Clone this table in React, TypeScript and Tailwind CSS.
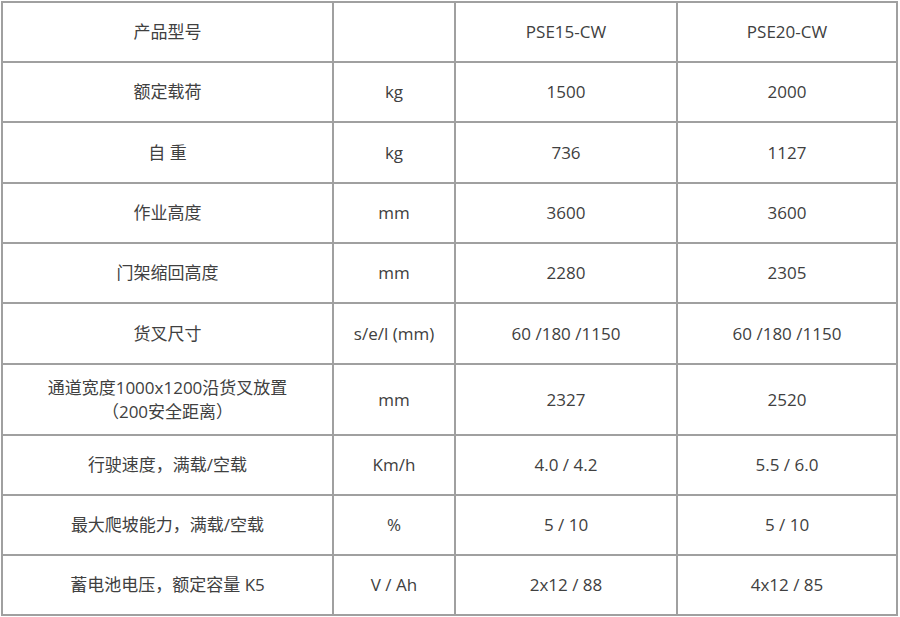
import React from "react";

type Row = { label: React.ReactNode; unit: string; a: string; b: string; h: string };

const rows: Row[] = [
  { label: "产品型号", unit: "", a: "PSE15-CW", b: "PSE20-CW", h: "h-[60px]" },
  { label: "额定载荷", unit: "kg", a: "1500", b: "2000", h: "h-[60px]" },
  { label: "自 重", unit: "kg", a: "736", b: "1127", h: "h-[61px]" },
  { label: "作业高度", unit: "mm", a: "3600", b: "3600", h: "h-[60px]" },
  { label: "门架缩回高度", unit: "mm", a: "2280", b: "2305", h: "h-[60px]" },
  { label: "货叉尺寸", unit: "s/e/l (mm)", a: "60 /180 /1150", b: "60 /180 /1150", h: "h-[61px]" },
  {
    label: (
      <>
        <div>通道宽度1000x1200沿货叉放置</div>
        <div>（200安全距离）</div>
      </>
    ),
    unit: "mm",
    a: "2327",
    b: "2520",
    h: "h-[71px]",
  },
  { label: "行驶速度，满载/空载", unit: "Km/h", a: "4.0 / 4.2", b: "5.5 / 6.0", h: "h-[60px]" },
  { label: "最大爬坡能力，满载/空载", unit: "%", a: "5 / 10", b: "5 / 10", h: "h-[60px]" },
  { label: "蓄电池电压，额定容量 K5", unit: "V / Ah", a: "2x12 / 88", b: "4x12 / 85", h: "h-[60px]" },
];

const cell =
  "flex flex-col items-center justify-center text-center border-r-2 border-b-2 border-[#a0a0a0] leading-[24px]";

export default function App() {
  return (
    <div className="w-[900px] h-[617px] bg-white pt-px pl-px">
      <div
        className="w-[897px] border-l-2 border-t-2 border-[#a0a0a0] text-[#404040] text-[17px]"
        style={{ fontFamily: '"Open Sans", "Noto Sans CJK SC", sans-serif' }}
      >
        {rows.map((r, i) => (
          <div key={i} className={`grid grid-cols-[331px_122px_222px_220px] ${r.h}`}>
            <div className={cell}>{r.label}</div>
            <div className={cell}>{r.unit}</div>
            <div className={cell}>{r.a}</div>
            <div className={cell}>{r.b}</div>
          </div>
        ))}
      </div>
    </div>
  );
}
